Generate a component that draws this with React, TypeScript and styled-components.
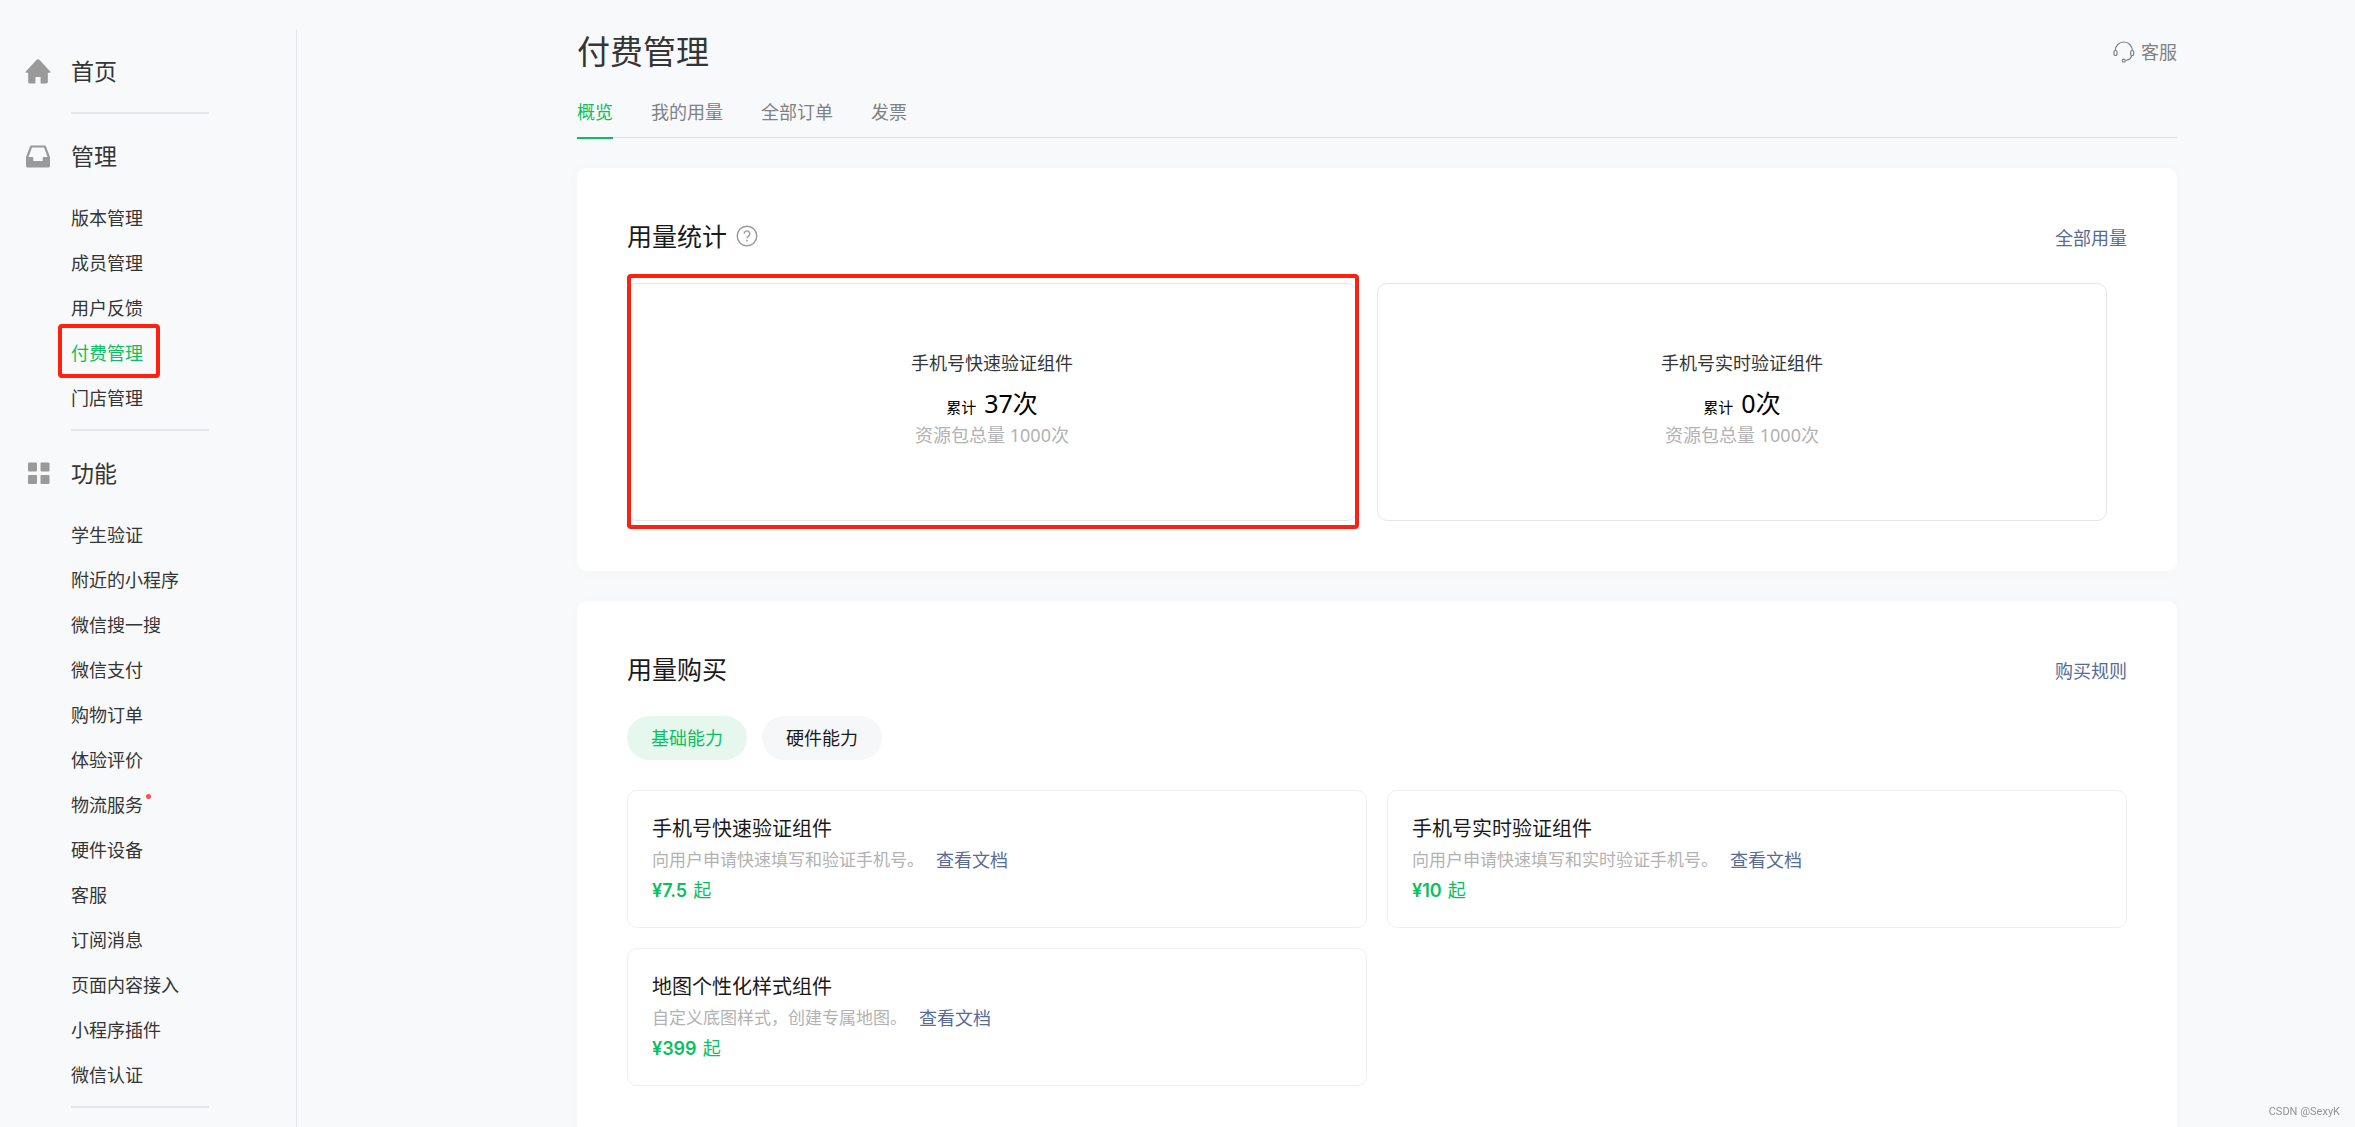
import React from "react";
import styled, { createGlobalStyle, css } from "styled-components";

const color = {
  page: "#f8f9fb",
  text: "#353535",
  strong: "#1a1a1a",
  muted: "#808184",
  faint: "#b2b2b2",
  line: "#e5e6e9",
  icon: "#9a9a9a",
  green: "#07c160",
  link: "#576b95",
  mark: "#ff2012",
};

const GlobalStyle = createGlobalStyle`
  *, *::before, *::after { box-sizing: border-box; }
  body {
    margin: 0;
    background: ${color.page};
    color: ${color.text};
    font-family: "Noto Sans", "Noto Sans CJK SC", sans-serif;
    font-size: 18px;
    font-weight: 400;
    line-height: 28px;
  }
  a { color: inherit; text-decoration: none; }
  button { font: inherit; border: 0; cursor: pointer; }
  h1, h2, h3, p, ul { margin: 0; padding: 0; font-weight: inherit; }
  ul { list-style: none; }
  svg { display: block; flex: none; }
`;

const Layout = styled.div`
  display: flex;
  height: 100vh;
  overflow: hidden;
`;

/* ---------- sidebar ---------- */

const Sidebar = styled.nav`
  flex: none;
  width: 297px;
  margin-top: 29px;
  padding-left: 25px;
  border-right: 1px solid ${color.line};
`;

const Group = styled.section<{ $single?: boolean }>`
  width: 184px;
  padding-top: 19px;
  padding-bottom: ${(p) => (p.$single ? 18 : 9)}px;
`;

const Divider = styled.hr`
  width: 138px;
  height: 2px;
  margin: 0 0 0 46px;
  border: 0;
  background: ${color.line};
`;

const GroupHead = styled.h2`
  display: flex;
  align-items: center;
  gap: 20px;
  height: 46px;
  font-size: 23px;
`;

const MenuList = styled.ul`
  margin-top: 16px;
  padding-left: 46px;
`;

const MenuItem = styled.li`
  display: flex;
  align-items: center;
  height: 45px;
`;

const MenuLink = styled.a<{ $active?: boolean }>`
  position: relative;
  white-space: nowrap;
  color: ${(p) => (p.$active ? color.green : "inherit")};
`;

const Dot = styled.span`
  position: absolute;
  top: 3px;
  right: -8px;
  width: 5px;
  height: 5px;
  border-radius: 50%;
  background: #fa5151;
`;

const markFrame = css`
  position: absolute;
  border: 4px solid ${color.mark};
  border-radius: 4px;
  pointer-events: none;
`;

const MenuMark = styled.span`
  ${markFrame}
  inset: -15px -17px -11px -13px;
`;

/* ---------- main column ---------- */

const Main = styled.main`
  flex: 1;
  min-width: 0;
  padding: 29px 178px 30px 280px;
  overflow-y: auto;
  scrollbar-width: none;
`;

const TitleBar = styled.header`
  display: flex;
  align-items: center;
  justify-content: space-between;
`;

const Title = styled.h1`
  font-size: 33px;
  line-height: 46px;
`;

const Service = styled.a`
  display: flex;
  align-items: center;
  gap: 6px;
  color: ${color.muted};
`;

const Tabs = styled.div`
  display: flex;
  align-items: flex-start;
  gap: 38px;
  height: 63px;
  margin-bottom: 30px;
  padding-top: 23px;
  border-bottom: 1px solid #e1e2e4;
`;

const Tab = styled.button<{ $active?: boolean }>`
  height: 41px;
  padding: 0 0 12px;
  background: none;
  color: ${(p) => (p.$active ? color.green : color.muted)};
  border-bottom: 2px solid ${(p) => (p.$active ? color.green : "transparent")};
`;

const Card = styled.section`
  margin-bottom: 30px;
  padding: 49px 50px 50px;
  border-radius: 10px;
  background: #fff;
  box-shadow: 0 1px 20px rgba(0, 0, 0, 0.02);
`;

const CardHead = styled.div`
  display: flex;
  align-items: flex-end;
  justify-content: space-between;
  margin-bottom: 28px;
`;

const CardTitle = styled.h2`
  display: flex;
  align-items: center;
  gap: 9px;
  font-size: 25px;
  line-height: 38px;
  color: ${color.strong};
`;

const HelpButton = styled.button`
  padding: 0;
  background: none;
  color: ${color.icon};
`;

const HeadLink = styled.a`
  line-height: 34px;
  color: ${color.link};
`;

const UsageRow = styled.div`
  display: grid;
  grid-template-columns: 1fr 1fr;
  gap: 20px;
  padding-right: 20px;
`;

const UsageBox = styled.article`
  position: relative;
  padding: 65px 0 71px;
  border: 1px solid ${color.line};
  border-radius: 10px;
  text-align: center;
`;

const UsageMark = styled.span`
  ${markFrame}
  inset: -10px -3px -9px -1px;
`;

const UsageName = styled.h3`
  margin-bottom: 8px;
  font-size: 18px;
`;

const UsageCount = styled.p`
  font-size: 25px;
  line-height: 36px;
  color: #000;
`;

const CountLabel = styled.span`
  margin-right: 8px;
  font-size: 15px;
  line-height: 1;
`;

const UsageTotal = styled.p`
  color: ${color.faint};
`;

const Pills = styled.div`
  display: flex;
  gap: 15px;
  margin-bottom: 30px;
`;

const Pill = styled.button<{ $active?: boolean }>`
  height: 44px;
  padding: 0 24px;
  border-radius: 22px;
  background: ${(p) => (p.$active ? "#e6f8ee" : "#f6f7f9")};
  color: ${(p) => (p.$active ? color.green : color.strong)};
`;

const Products = styled.div`
  display: grid;
  grid-template-columns: 1fr 1fr;
  gap: 20px;
`;

const Product = styled.article`
  padding: 23px 24px;
  border: 1px solid #efeff0;
  border-radius: 10px;
`;

const ProductName = styled.h3`
  font-size: 20px;
  line-height: 30px;
  color: ${color.strong};
`;

const ProductInfo = styled.p`
  display: flex;
  gap: 12px;
  line-height: 32px;
  color: ${color.faint};
`;

const ProductText = styled.span`
  font-size: 17px;
`;

const DocLink = styled.a`
  color: ${color.link};
`;

const Price = styled.p`
  color: ${color.green};
`;

const Amount = styled.strong`
  margin-right: 6px;
  font-family: Inter, "Noto Sans", sans-serif;
  font-weight: 600;
  line-height: 1;
`;

const Watermark = styled.small`
  position: fixed;
  right: 15px;
  bottom: 7px;
  font: 400 11px/16px Roboto, Arial, sans-serif;
  color: #929396;
`;

/* ---------- icons ---------- */

const HomeIcon = () => (
  <svg width="26" height="26" viewBox="0 -1 26 27" fill={color.icon} aria-hidden="true">
    <path d="M11.6.9a2 2 0 0 1 2.8 0L25.7 13c.5.6.3 1.3-.5 1.3H23.2V24a1.5 1.5 0 0 1-1.5 1.5H15.7V19.5a.8.8 0 0 0-.8-.8H11.100a.8.8 0 0 0-.8.8v6H4.3A1.500 1.500 0 0 1 2.800 24V14.300H.8C0 14.300-.2 13.600.300 13z" />
  </svg>
);

const TrayIcon = () => (
  <svg width="26" height="26" viewBox="0 -1 26 26" aria-hidden="true">
    <path
      fill={color.icon}
      fillRule="evenodd"
      d="M6.4 1.500H19.600a1.500 1.500 0 0 1 1.400 1L25 13V22a1.500 1.500 0 0 1-1.500 1.500H2.500A1.500 1.500 0 0 1 1 22V13L5 2.500a1.500 1.500 0 0 1 1.400-1zM7 3.500 3.500 13H7.300a1 1 0 0 1 1 1V17H17.700V14a1 1 0 0 1 1-1H22.500L19 3.500z"
    />
  </svg>
);

const GridIcon = () => (
  <svg width="26" height="26" viewBox="0 -1 26 26" fill={color.icon} aria-hidden="true">
    <rect x="3" y="1.500" width="9" height="9" rx="1" />
    <rect x="15.500" y="1.500" width="9" height="9" rx="1" />
    <rect x="3" y="14" width="9" height="9" rx="1" />
    <rect x="15.500" y="14" width="9" height="9" rx="1" />
  </svg>
);

const HeadsetIcon = () => (
  <svg width="22" height="22" viewBox="0 0 22 22" fill="none" stroke={color.muted} strokeWidth="1.200" aria-hidden="true">
    <path d="M2.300 9.500a8.500 8.500 0 0 1 17 0" />
    <rect x="1" y="9.500" width="3" height="5" rx="1.300" />
    <rect x="17.700" y="9.500" width="3" height="5" rx="1.300" />
    <path d="M18.800 14.500c-.8 2.800-3 4.600-6.300 5" />
    <circle cx="10.800" cy="19.700" r="1.500" />
  </svg>
);

const HelpIcon = () => (
  <svg width="22" height="22" viewBox="0 0 22 22" fill="none" stroke="currentColor" strokeWidth="1.400" aria-hidden="true">
    <circle cx="11" cy="11" r="9.800" />
    <path d="M8.200 8.800a2.800 2.800 0 1 1 4.300 2.300c-1 .7-1.500 1.100-1.500 2.200" />
    <circle cx="11" cy="15.600" r=".9" fill="currentColor" stroke="none" />
  </svg>
);

/* ---------- data ---------- */

const groups = [
  {
    title: "管理",
    Icon: TrayIcon,
    items: ["版本管理", "成员管理", "用户反馈", "付费管理", "门店管理"],
  },
  {
    title: "功能",
    Icon: GridIcon,
    items: [
      "学生验证",
      "附近的小程序",
      "微信搜一搜",
      "微信支付",
      "购物订单",
      "体验评价",
      "物流服务",
      "硬件设备",
      "客服",
      "订阅消息",
      "页面内容接入",
      "小程序插件",
      "微信认证",
    ],
  },
];

const tabs = ["概览", "我的用量", "全部订单", "发票"];

const usage = [
  { name: "手机号快速验证组件", count: 37, total: 1000, marked: true },
  { name: "手机号实时验证组件", count: 0, total: 1000, marked: false },
];

const products = [
  { name: "手机号快速验证组件", text: "向用户申请快速填写和验证手机号。", price: "7.5" },
  { name: "手机号实时验证组件", text: "向用户申请快速填写和实时验证手机号。", price: "10" },
  { name: "地图个性化样式组件", text: "自定义底图样式，创建专属地图。", price: "399" },
];

export default function App() {
  return (
    <>
      <GlobalStyle />
      <Layout lang="zh-CN">
        <Sidebar>
          <Group $single>
            <GroupHead>
              <HomeIcon />
              <a href="#home">首页</a>
            </GroupHead>
          </Group>
          <Divider />
          {groups.map(({ title, Icon, items }) => (
            <React.Fragment key={title}>
              <Group>
                <GroupHead>
                  <Icon />
                  {title}
                </GroupHead>
                <MenuList>
                  {items.map((item) => (
                    <MenuItem key={item}>
                      <MenuLink href="#menu" $active={item === "付费管理"}>
                        {item}
                        {item === "付费管理" && <MenuMark />}
                        {item === "物流服务" && <Dot />}
                      </MenuLink>
                    </MenuItem>
                  ))}
                </MenuList>
              </Group>
              <Divider />
            </React.Fragment>
          ))}
        </Sidebar>

        <Main>
          <TitleBar>
            <Title>付费管理</Title>
            <Service href="#service">
              <HeadsetIcon />
              客服
            </Service>
          </TitleBar>
          <Tabs role="tablist">
            {tabs.map((tab, i) => (
              <Tab key={tab} role="tab" aria-selected={i === 0} $active={i === 0}>
                {tab}
              </Tab>
            ))}
          </Tabs>

          <Card>
            <CardHead>
              <CardTitle>
                用量统计
                <HelpButton aria-label="说明">
                  <HelpIcon />
                </HelpButton>
              </CardTitle>
              <HeadLink href="#usage">全部用量</HeadLink>
            </CardHead>
            <UsageRow>
              {usage.map((u) => (
                <UsageBox key={u.name}>
                  <UsageName>{u.name}</UsageName>
                  <UsageCount>
                    <CountLabel>累计</CountLabel>
                    {u.count}次
                  </UsageCount>
                  <UsageTotal>资源包总量 {u.total}次</UsageTotal>
                  {u.marked && <UsageMark />}
                </UsageBox>
              ))}
            </UsageRow>
          </Card>

          <Card>
            <CardHead>
              <CardTitle>用量购买</CardTitle>
              <HeadLink href="#rules">购买规则</HeadLink>
            </CardHead>
            <Pills>
              <Pill $active>基础能力</Pill>
              <Pill>硬件能力</Pill>
            </Pills>
            <Products>
              {products.map((p) => (
                <Product key={p.name}>
                  <ProductName>{p.name}</ProductName>
                  <ProductInfo>
                    <ProductText>{p.text}</ProductText>
                    <DocLink href="#doc">查看文档</DocLink>
                  </ProductInfo>
                  <Price>
                    <Amount>¥{p.price}</Amount>起
                  </Price>
                </Product>
              ))}
            </Products>
          </Card>
        </Main>
      </Layout>
      <Watermark>CSDN @SexyK</Watermark>
    </>
  );
}
